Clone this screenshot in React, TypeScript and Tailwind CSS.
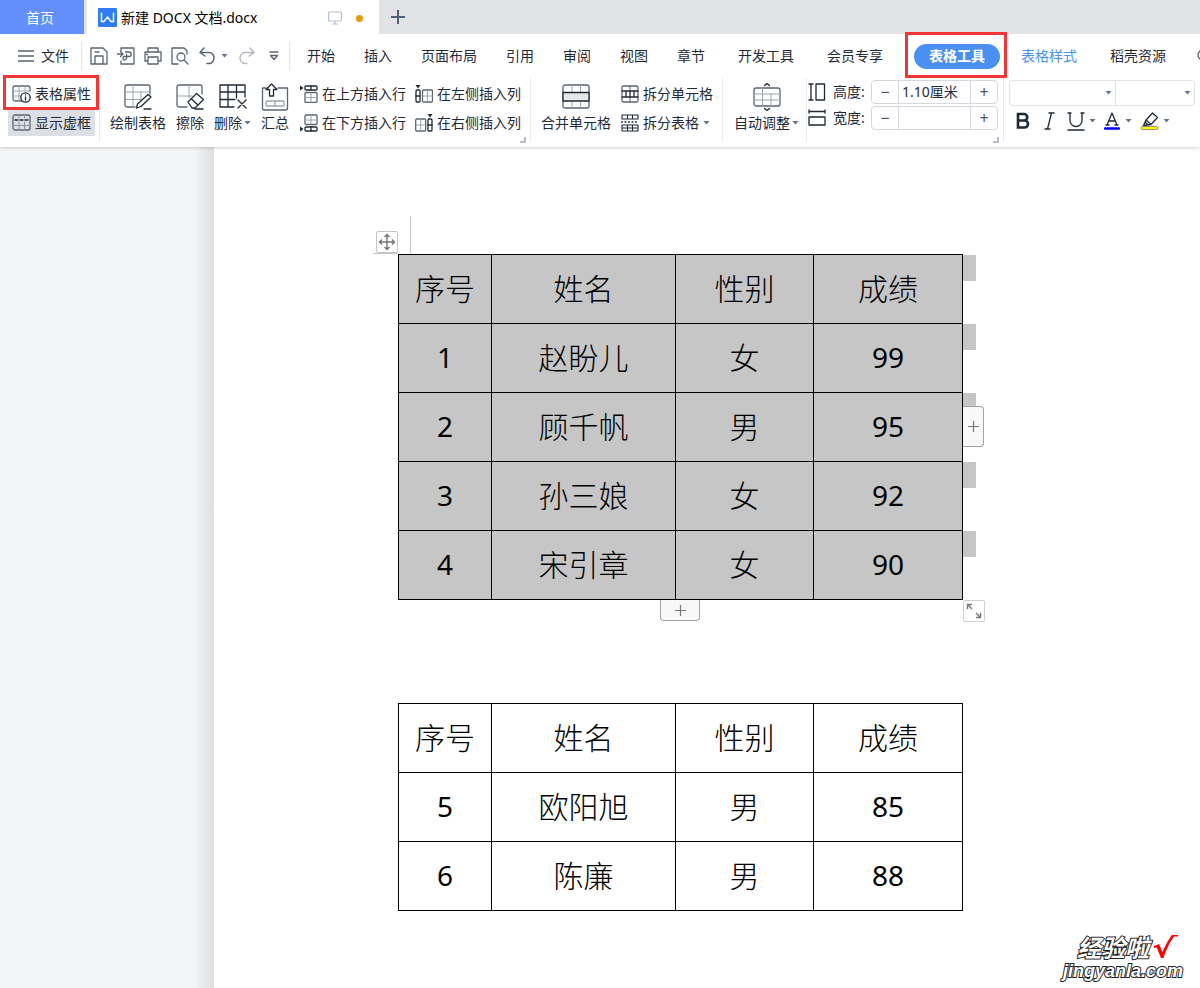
import type { ReactNode } from "react";

const UI_FONT =
  "font-['Noto_Sans','Noto_Sans_CJK_SC',sans-serif] text-sm text-[#1f2937]";

const firstTable = {
  header: ["序号", "姓名", "性别", "成绩"],
  rows: [
    ["1", "赵盼儿", "女", "99"],
    ["2", "顾千帆", "男", "95"],
    ["3", "孙三娘", "女", "92"],
    ["4", "宋引章", "女", "90"],
  ],
};

const secondTable = {
  header: ["序号", "姓名", "性别", "成绩"],
  rows: [
    ["5", "欧阳旭", "男", "85"],
    ["6", "陈廉", "男", "88"],
  ],
};

type IconProps = { w?: number; h?: number; children: ReactNode };

function Icon({ w = 18, h = 18, children }: IconProps) {
  return (
    <svg
      width={w}
      height={h}
      viewBox={`0 0 ${w} ${h}`}
      fill="none"
      stroke="#5b6472"
      strokeWidth="1.3"
      strokeLinecap="round"
      strokeLinejoin="round"
      className="shrink-0"
      aria-hidden="true"
    >
      {children}
    </svg>
  );
}

function Caret() {
  return (
    <svg width="7" height="4" viewBox="0 0 7 4" className="shrink-0" aria-hidden="true">
      <path d="M0.5 0h6L3.5 3.5z" fill="#64748b" />
    </svg>
  );
}

function Divider() {
  return <div className="h-16 w-px shrink-0 bg-[#e9ebf0]" />;
}

function CornerMark() {
  return (
    <svg
      width="6"
      height="6"
      viewBox="0 0 6 6"
      className="absolute right-1 bottom-1"
      aria-hidden="true"
    >
      <path d="M5 0v5H0" stroke="#a3acbf" strokeWidth="1.6" fill="none" />
    </svg>
  );
}

function TitleBar() {
  return (
    <div className="flex h-[34px] bg-[#e2e3e7]">
      <button className="w-[84px] bg-[#628ffb] pt-0.5 pr-1 text-white">首页</button>
      <div className="ml-[3px] flex w-[292px] items-center bg-white pl-[11px]">
        <svg width="19" height="19" viewBox="0 0 19 19" aria-hidden="true">
          <rect width="19" height="19" rx="1" fill="#2f7df0" />
          <path
            d="M3.500 4.500v9h2.500l3.500-4.500 3.500 4.500h2.500v-9"
            stroke="#fff"
            strokeWidth="1.4"
            fill="none"
          />
        </svg>
        <span className="ml-1 pt-0.5 text-black">新建 DOCX 文档.docx</span>
        <div className="mr-4 ml-auto flex items-center gap-[14px] pt-0.5">
          <svg width="14" height="14" viewBox="0 0 14 14" fill="none" stroke="#b6bfd6" strokeWidth="1.2" aria-hidden="true">
            <rect x="0.6" y="1" width="12.8" height="9" rx="1" />
            <path d="M7 10v3M4 13h6" />
          </svg>
          <span className="h-[7px] w-[7px] rounded-full bg-[#e39a0c]" />
        </div>
      </div>
      <button className="w-10 pr-0.5" aria-label="新建标签">
        <svg width="14" height="14" viewBox="0 0 14 14" className="mx-auto" aria-hidden="true">
          <path d="M7 0v14M0 7h14" stroke="#4f607c" strokeWidth="2" />
        </svg>
      </button>
    </div>
  );
}

function QuickAccess() {
  return (
    <div className="flex h-11 shrink-0 items-center">
      <button className="ml-[18px] flex items-center gap-[7px]">
        <Icon w={16} h={12}>
          <path d="M0 1h16M0 6h16M0 11h16" />
        </Icon>
        文件
      </button>
      <div className="ml-3 h-7 w-px bg-[#dfe2ea]" />
      <div className="ml-2 flex items-center gap-[9px]">
        <button aria-label="保存">
          <Icon>
            <path d="M1 1h12l4 4v12H1zM5 17V9h8v8M5 5h4" />
          </Icon>
        </button>
        <button aria-label="输出为PDF">
          <Icon>
            <path d="M4 4V1h13v16H4v-3M0 7h5.500M3.500 4.500L6 7 3.500 9.500" />
            <path d="M8.500 5H12a2.200 2.200 0 0 1 0 4.500H7.500a1.800 1.800 0 1 0 2 2V7.500" />
          </Icon>
        </button>
        <button aria-label="打印">
          <Icon>
            <path d="M4 5V1h10v4M4 14H1V5h16v9h-3M4 10h10v7H4zM2.500 7.500h1" />
          </Icon>
        </button>
        <button aria-label="打印预览">
          <Icon>
            <path d="M7 17H1V1h12l3 3v3" />
            <circle cx="10" cy="10" r="4" />
            <path d="M13 13l4 4" />
          </Icon>
        </button>
      </div>
      <button className="ml-2.5 flex items-center gap-[5px]" aria-label="撤销">
        <Icon w={17} h={18}>
          <path d="M5 1L1 5.500l5 3.500M1.500 5.500H10a5 5.500 0 0 1 0 11H8" strokeWidth="1.500" />
        </Icon>
        <Caret />
      </button>
      <button className="ml-2.5" aria-label="恢复">
        <svg width="17" height="18" viewBox="0 0 17 18" fill="none" stroke="#b5b8bd" strokeWidth="1.4" strokeLinecap="round" aria-hidden="true">
          <path d="M12 1l4 4.500L11 9M15.500 5.500H7a5 5.500 0 0 0 0 11h2" />
        </svg>
      </button>
      <button className="ml-3.5" aria-label="自定义">
        <Icon w={10} h={10}>
          <path d="M1 1h8M1.500 4.500L5 8.500l3.500-4z" />
        </Icon>
      </button>
      <div className="ml-2.5 h-7 w-px bg-[#dfe2ea]" />
    </div>
  );
}

const mainTabs = ["开始", "插入", "页面布局", "引用", "审阅", "视图", "章节"];

function MenuBar() {
  return (
    <div className="flex h-11 overflow-visible whitespace-nowrap">
      <QuickAccess />
      <nav className="flex min-w-0 flex-1 items-center pl-[17px]">
        <div className="flex shrink-0 gap-[29px]">
          {mainTabs.map((tab) => (
            <button key={tab}>{tab}</button>
          ))}
        </div>
        <div className="ml-[33px] flex shrink-0 items-center gap-[33px]">
          <button>开发工具</button>
          <button>会员专享</button>
        </div>
        <div className="relative ml-[31px] shrink-0">
          <button className="h-[25px] rounded-full bg-[#4a90f2] px-[15px] font-bold text-white">
            表格工具
          </button>
          <div className="pointer-events-none absolute -top-3 -right-[7px] -bottom-[9px] -left-[9px] border-3 border-[#f23535]" />
        </div>
        <div className="ml-[21px] flex shrink-0 gap-[33px]">
          <button className="text-[#4a90f2]">表格样式</button>
          <button>稻壳资源</button>
        </div>
        <button className="ml-[31px] w-[3px] overflow-hidden" aria-label="查找">
          <Icon w={14} h={14}>
            <circle cx="6" cy="6" r="5" />
            <path d="M10 10l3 3" />
          </Icon>
        </button>
      </nav>
    </div>
  );
}

type ButtonProps = { icon: ReactNode; label: string; caret?: boolean };

function BigButton({ icon, label, caret }: ButtonProps) {
  return (
    <button className="mt-1.5 flex shrink-0 flex-col items-center gap-[3px] self-start">
      <span className="flex h-[26px] items-center">{icon}</span>
      <span className="flex items-center gap-0.5 leading-5">
        {label}
        {caret && <Caret />}
      </span>
    </button>
  );
}

function SmallButton({ icon, label, caret }: ButtonProps) {
  return (
    <button className="flex h-[26px] items-center gap-1">
      {icon}
      {label}
      {caret && <Caret />}
    </button>
  );
}

function Column({ children }: { children: ReactNode }) {
  return <div className="flex shrink-0 flex-col gap-[3px] pt-[3px]">{children}</div>;
}

function PropertiesIcon() {
  return (
    <Icon w={19}>
      <path d="M10 16H3a2 2 0 0 1-2-2V3a2 2 0 0 1 2-2h13a2 2 0 0 1 2 2v3" />
      <path d="M1 6h17M1 11h8M7 1v15M13 1v4" stroke="#9ca3af" strokeWidth="1" />
      <circle cx="13.5" cy="12.5" r="4.700" stroke="#1f2937" />
      <path d="M13.500 12v3M13.500 10v0.100" stroke="#1f2937" />
    </Icon>
  );
}

function GridLinesIcon() {
  return (
    <Icon w={19}>
      <rect x="1" y="1" width="17" height="15" rx="2" />
      <path d="M1 11.500h17M7 1v3M12.500 1v3M7 8v8M12.500 8v8" stroke="#8b929e" strokeWidth="1" />
      <path d="M3 6h3M8 6h3M13 6h3" stroke="#1f2937" />
    </Icon>
  );
}

function DrawTableIcon() {
  return (
    <Icon w={28} h={26}>
      <path d="M11 23H3a2 2 0 0 1-2-2V3a2 2 0 0 1 2-2h21a2 2 0 0 1 2 2v7" />
      <path d="M1 8h25M1 15.500h16M9 1v22M17 8v8" stroke="#9ca3af" strokeWidth="1" />
      <path d="M12.500 24l1-4L24 10.500l3 2.500L17 22.500zM20 25h7" stroke="#1f2937" />
    </Icon>
  );
}

function EraseIcon() {
  return (
    <Icon w={28} h={26}>
      <path d="M11 23H3a2 2 0 0 1-2-2V3a2 2 0 0 1 2-2h21a2 2 0 0 1 2 2v7" />
      <path d="M1 12h15M13 1v13" stroke="#9ca3af" strokeWidth="1" />
      <path d="M12 18l8.500-8.500 7 6L19 24h-3zM15.500 15l6.500 6M19 25h8" stroke="#1f2937" />
    </Icon>
  );
}

function DeleteIcon() {
  return (
    <Icon w={28} h={26}>
      <g stroke="#1f2937">
        <path d="M15 23H1V1h25v12M1 8h25M1 15.500h15M9 1v22M17.500 1v13" />
        <path d="M19 16l8 8M27 16l-8 8" />
      </g>
    </Icon>
  );
}

function SummaryIcon() {
  return (
    <Icon w={28} h={28}>
      <path d="M5 5H1.500v20a2 2 0 0 0 2 2h21a2 2 0 0 0 2-2V5H17" />
      <rect x="5" y="18" width="18" height="5" rx="1" stroke="#9ca3af" />
      <path d="M14 18v5" stroke="#9ca3af" />
      <path d="M8.500 13V6.500H5L10.500 1 16 6.500h-3.500V13z" stroke="#1f2937" />
    </Icon>
  );
}

function RowAboveIcon() {
  return (
    <Icon>
      <g stroke="#1f2937">
        <rect x="5" y="1" width="12" height="4" rx="1" />
        <path d="M11 1v4" />
      </g>
      <rect x="5" y="7.500" width="12" height="10" rx="1" />
      <path d="M11 8v9M5.500 12.500h11" stroke="#9ca3af" strokeWidth="1" />
      <path d="M0 0.500v5L3.500 3z" fill="#1f2937" stroke="none" />
    </Icon>
  );
}

function RowBelowIcon() {
  return (
    <Icon>
      <rect x="5" y="1" width="12" height="9.500" rx="1" />
      <path d="M11 1.500v8.500M5.500 6h11" stroke="#9ca3af" strokeWidth="1" />
      <g stroke="#1f2937">
        <rect x="5" y="13" width="12" height="4" rx="1" />
        <path d="M11 13v4" />
      </g>
      <path d="M0 12.500v5L3.500 15z" fill="#1f2937" stroke="none" />
    </Icon>
  );
}

function ColumnLeftIcon() {
  return (
    <Icon>
      <g stroke="#1f2937">
        <rect x="1" y="5" width="4" height="12" rx="1" />
        <path d="M1 11h4" />
      </g>
      <rect x="7.500" y="5" width="10" height="12" rx="1" />
      <path d="M8 11h9M12.500 5.500v11" stroke="#9ca3af" strokeWidth="1" />
      <path d="M0.500 0h5L3 3.500z" fill="#1f2937" stroke="none" />
    </Icon>
  );
}

function ColumnRightIcon() {
  return (
    <Icon>
      <rect x="0.700" y="5" width="10" height="12" rx="1" />
      <path d="M1 11h9M5.700 5.500v11" stroke="#9ca3af" strokeWidth="1" />
      <g stroke="#1f2937">
        <rect x="13" y="5" width="4" height="12" rx="1" />
        <path d="M13 11h4" />
      </g>
      <path d="M12.500 0h5L15 3.500z" fill="#1f2937" stroke="none" />
    </Icon>
  );
}

function MergeIcon() {
  return (
    <Icon w={28} h={26}>
      <rect x="1" y="1" width="26" height="23" rx="2" />
      <path d="M10 1v23M18.500 1v23" stroke="#9ca3af" strokeWidth="1" />
      <path d="M1 8.500h26v8.500H1z" fill="#e5e7eb" stroke="#1f2937" />
    </Icon>
  );
}

function SplitCellIcon() {
  return (
    <Icon>
      <rect x="1" y="1" width="16" height="16" rx="1.500" />
      <path d="M9 1v5M9 12v5" strokeWidth="1" />
      <path d="M1 6h16M1 12h16M5 6v6M9 6v6M13 6v6" stroke="#1f2937" />
    </Icon>
  );
}

function SplitTableIcon() {
  return (
    <Icon>
      <path d="M1 5V1h16v4zM6.500 1v4M11.500 1v4M1 11h16v6H1zM1 14h16M6.500 11v6M11.500 11v6" stroke="#1f2937" strokeWidth="1.100" />
      <path d="M0.500 8h1M4 8h1M7.500 8h1M11 8h1M14.500 8h1" stroke="#1f2937" />
    </Icon>
  );
}

function AutoFitIcon() {
  return (
    <Icon w={28} h={28}>
      <rect x="1" y="5" width="26" height="18" rx="2" />
      <path d="M1 11h26M1 17h26M9.500 5v18M18 11v12" stroke="#9ca3af" strokeWidth="1" />
      <path d="M11.500 2.500L14 0.500l2.500 2M11.500 25.500l2.500 2 2.500-2" stroke="#1f2937" />
    </Icon>
  );
}

type StepperProps = { id: string; label: string; value: string; icon: ReactNode };

function Stepper({ id, label, value, icon }: StepperProps) {
  return (
    <div className="flex h-6 items-center">
      {icon}
      <label htmlFor={id} className="ml-[7px] w-[38px]">
        {label}
      </label>
      <div className="flex h-6 w-[127px] rounded-sm border border-[#d5d8df] text-base text-[#4b5563]">
        <button className="w-[26px] shrink-0 leading-none" aria-label={`减小${label}`}>
          −
        </button>
        <input
          id={id}
          defaultValue={value}
          className="min-w-0 flex-1 border-x border-[#d5d8df] pl-[3px] text-sm text-[#1f2937] outline-none"
        />
        <button className="w-[26px] shrink-0 leading-none" aria-label={`增大${label}`}>
          +
        </button>
      </div>
    </div>
  );
}

function Combo({ name, className }: { name: string; className: string }) {
  return (
    <div className={`relative h-6 ${className}`}>
      <select aria-label={name} className="h-full w-full appearance-none outline-none">
        <option></option>
      </select>
      <span className="pointer-events-none absolute top-[10px] right-[3px]">
        <Caret />
      </span>
    </div>
  );
}

function FontGroup() {
  return (
    <div className="ml-[5px] w-[186px] shrink-0 pt-0.5">
      <div className="flex rounded-sm border border-[#dfe2e8]">
        <Combo name="字体" className="w-[106px] border-r border-[#dfe2e8]" />
        <Combo name="字号" className="flex-1" />
      </div>
      <div className="flex h-[30px] items-center pl-[7px]">
        <button aria-label="加粗">
          <svg width="14" height="18" viewBox="0 0 14 18" fill="none" stroke="#1f2937" strokeWidth="2.600" aria-hidden="true">
            <path d="M2 2h6a3 3 0 0 1 0 6.500H2zM2 8.500h6.500a3.500 3.500 0 0 1 0 7H2z" />
          </svg>
        </button>
        <button className="ml-3.5" aria-label="倾斜">
          <Icon w={11}>
            <path d="M5 1h5M1 17h5M7.500 1l-4 16" stroke="#1f2937" />
          </Icon>
        </button>
        <button className="ml-3 flex items-center gap-1" aria-label="下划线">
          <Icon w={18} h={20}>
            <path d="M3 2v7.500a6 6 0 0 0 12 0V2M1 19h16M1 2h3M14 2h3" stroke="#1f2937" />
          </Icon>
          <Caret />
        </button>
        <button className="ml-2 flex items-center gap-[5px]" aria-label="字体颜色">
          <Icon w={16}>
            <path d="M3 13L8 1l5 12M5 9h6M2 13h3M11 13h3" stroke="#1f2937" />
            <path d="M1 16.500h14" stroke="#0000ff" strokeWidth="2.500" />
          </Icon>
          <Caret />
        </button>
        <button className="ml-2 flex items-center gap-1" aria-label="突出显示">
          <Icon w={19}>
            <path d="M6 8l6.500-7 5 4.500-6.500 7zM6 8l-2.500 5.500L11 12.500M5 10l3 3" stroke="#1f2937" />
            <rect x="1" y="14.500" width="17" height="3" rx="1.500" fill="#ffff00" strokeWidth="0.700" />
          </Icon>
          <Caret />
        </button>
      </div>
    </div>
  );
}

function Ribbon() {
  return (
    <div className="flex h-[69px] whitespace-nowrap">
      <div className="mr-1 ml-2 flex shrink-0 flex-col gap-[3px] pt-[3px]">
        <div className="relative">
          <button className="flex h-[26px] items-center gap-1 px-1">
            <PropertiesIcon />
            表格属性
          </button>
          <div className="pointer-events-none absolute -top-1.5 -right-1 -bottom-[3px] -left-[5px] border-3 border-[#f23535]" />
        </div>
        <button className="flex h-[26px] items-center gap-1 bg-[#dce0e5] px-1">
          <GridLinesIcon />
          显示虚框
        </button>
      </div>
      <Divider />
      <div className="relative flex shrink-0 pr-[9px] pl-2.5">
        <div className="mr-[11px] flex gap-2.5">
          <BigButton icon={<DrawTableIcon />} label="绘制表格" />
          <BigButton icon={<EraseIcon />} label="擦除" />
          <BigButton icon={<DeleteIcon />} label="删除" caret />
          <BigButton icon={<SummaryIcon />} label="汇总" />
        </div>
        <div className="flex gap-[9px]">
          <Column>
            <SmallButton icon={<RowAboveIcon />} label="在上方插入行" />
            <SmallButton icon={<RowBelowIcon />} label="在下方插入行" />
          </Column>
          <Column>
            <SmallButton icon={<ColumnLeftIcon />} label="在左侧插入列" />
            <SmallButton icon={<ColumnRightIcon />} label="在右侧插入列" />
          </Column>
        </div>
        <CornerMark />
      </div>
      <Divider />
      <div className="flex shrink-0 gap-2.5 pr-[9px] pl-2.5">
        <BigButton icon={<MergeIcon />} label="合并单元格" />
        <Column>
          <SmallButton icon={<SplitCellIcon />} label="拆分单元格" />
          <SmallButton icon={<SplitTableIcon />} label="拆分表格" caret />
        </Column>
      </div>
      <Divider />
      <div className="flex shrink-0 pr-[7px] pl-[11px]">
        <BigButton icon={<AutoFitIcon />} label="自动调整" caret />
      </div>
      <Divider />
      <div className="relative flex shrink-0 flex-col gap-0.5 pt-0.5 pr-[5px] pl-px">
        <Stepper
          id="row-height"
          label="高度:"
          value="1.10厘米"
          icon={
            <Icon>
              <path d="M1 1h4M1 17h4M3 1v16M8 1h8.500v16H8z" stroke="#1f2937" />
            </Icon>
          }
        />
        <Stepper
          id="column-width"
          label="宽度:"
          value=""
          icon={
            <Icon>
              <path d="M1 1v3M17 1v3M1 2.500h16M1 8h16v8H1z" stroke="#1f2937" />
            </Icon>
          }
        />
        <CornerMark />
      </div>
      <Divider />
      <FontGroup />
    </div>
  );
}

type SheetProps = { header: string[]; rows: string[][]; selected?: boolean };

function ScoreTable({ header, rows, selected }: SheetProps) {
  const cell = "relative h-[69px] border border-black p-0 pb-1 text-center font-extralight";
  // the strip right of every row marks the selected end-of-row sign
  const mark = selected && (
    <span className="absolute top-0 left-full ml-px h-[26px] w-[13px] bg-[#c6c6c6]" />
  );
  return (
    <table
      className={`w-full table-fixed border-collapse font-['Noto_Sans_CJK_SC',sans-serif] text-[30px] leading-9 text-black ${
        selected ? "bg-[#c6c6c6]" : "bg-white"
      }`}
    >
      <colgroup>
        <col className="w-[93px]" />
        <col className="w-[184px]" />
        <col className="w-[138px]" />
        <col className="w-[149px]" />
      </colgroup>
      <thead>
        <tr>
          {header.map((text, i) => (
            <th key={text} className={cell}>
              {text}
              {i === 3 && mark}
            </th>
          ))}
        </tr>
      </thead>
      <tbody>
        {rows.map((row) => (
          <tr key={row[0]}>
            {row.map((text, i) => (
              <td key={i} className={cell}>
                {i === 0 || i === 3 ? (
                  <span className="font-['Noto_Sans',sans-serif] text-[28px] font-normal">
                    {text}
                  </span>
                ) : (
                  text
                )}
                {i === 3 && mark}
              </td>
            ))}
          </tr>
        ))}
      </tbody>
    </table>
  );
}

function TableHandles() {
  return (
    <>
      <div className="absolute -top-[38px] left-3 h-[38px] w-px bg-[#c4c4c4]" />
      <div className="absolute -top-px -left-[25px] h-px w-[25px] bg-[#c4c4c4]" />
      <button
        className="absolute -top-[23px] -left-[22px] flex h-[22px] w-[22px] items-center justify-center rounded-xs border border-[#c4c4c4] bg-white"
        aria-label="移动表格"
      >
        <svg width="18" height="18" viewBox="0 0 18 18" className="shrink-0" fill="none" stroke="#777" strokeWidth="1.400" aria-hidden="true">
          <path d="M9 1.500v15M1.500 9h15M6.500 4L9 1.500 11.500 4M6.500 14L9 16.500l2.500-2.500M4 6.500L1.500 9 4 11.500M14 6.500L16.500 9 14 11.500" />
        </svg>
      </button>
      <button
        className="absolute top-[152px] left-full flex h-[41px] w-[21px] items-center justify-center rounded-r border border-l-0 border-[#a3a3a3] bg-[#f8f8f8]"
        aria-label="添加列"
      >
        <PlusIcon />
      </button>
      <button
        className="absolute top-full left-[262px] flex h-[21px] w-10 items-center justify-center rounded-b border border-t-0 border-[#a3a3a3] bg-[#f8f8f8]"
        aria-label="添加行"
      >
        <PlusIcon />
      </button>
      <button
        className="absolute top-full left-full flex h-[22px] w-[22px] items-center justify-center rounded-xs border border-[#cfcfcf] bg-white"
        aria-label="调整表格大小"
      >
        <svg width="16" height="16" viewBox="0 0 16 16" className="shrink-0" fill="none" stroke="#777" strokeWidth="1.400" aria-hidden="true">
          <path d="M1.500 6V1.500H6M1.500 1.500L6 6M14.500 10v4.500H10M14.500 14.500L10 10" />
        </svg>
      </button>
    </>
  );
}

function PlusIcon() {
  return (
    <svg width="11" height="11" viewBox="0 0 11 11" aria-hidden="true">
      <path d="M5.500 0v11M0 5.500h11" stroke="#777" strokeWidth="1.200" />
    </svg>
  );
}

function Watermark() {
  return (
    <div className="pointer-events-none absolute right-[17px] bottom-[7px] flex flex-col text-white italic [paint-order:stroke_fill] [-webkit-text-stroke:2px_#222]">
      <div className="flex items-center gap-1 pl-[14px]">
        <span className="font-['Noto_Sans_CJK_SC',sans-serif] text-2xl leading-7 font-bold">
          经验啦
        </span>
        <svg width="26" height="26" viewBox="0 0 26 26" aria-hidden="true">
          <path d="M1 12l5-2 3.500 8C13 10 17 3 19 1h6v1.500h-4C17 8 13 16 10.500 24H8C6 19 4.500 15 3.500 13.500L1 14z" fill="#ff0000" />
        </svg>
      </div>
      <span className="font-['Liberation_Sans',sans-serif] text-lg leading-5 font-bold">
        jingyanla.com
      </span>
    </div>
  );
}

export default function App() {
  return (
    <div className={`flex min-h-screen flex-col overflow-hidden bg-white ${UI_FONT}`}>
      <header className="relative z-10 bg-white shadow-[0_1px_3px_rgba(0,0,0,0.18)]">
        <TitleBar />
        <MenuBar />
        <Ribbon />
      </header>
      <main className="relative flex flex-1">
        <aside className="flex w-[214px] shrink-0 justify-end bg-[#f4f5f7]">
          <div className="w-[18px] bg-linear-to-r from-[#f1f2f4] to-[#dcdee0]" />
        </aside>
        <article className="min-w-0 flex-1 bg-white pt-[107px] pb-[77px] pl-[184px]">
          <div className="relative w-[565px]">
            <ScoreTable {...firstTable} selected />
            <TableHandles />
          </div>
          <div className="mt-[103px] w-[565px]">
            <ScoreTable {...secondTable} />
          </div>
        </article>
        <Watermark />
      </main>
    </div>
  );
}
